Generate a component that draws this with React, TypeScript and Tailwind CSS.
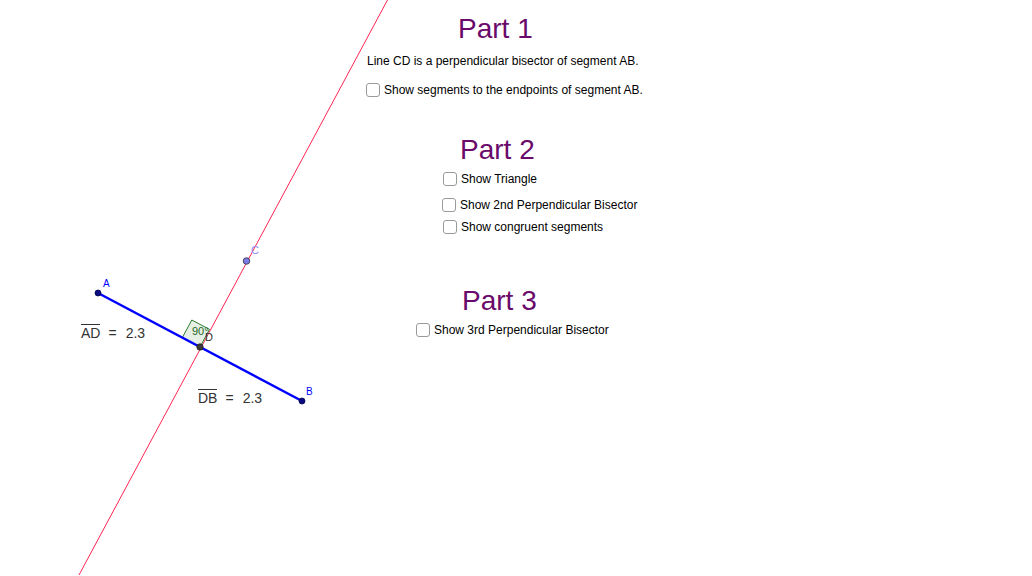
import React from "react";

const font = { fontFamily: '"Liberation Sans", Arial, sans-serif' };

function Check({ label, className }: { label: string; className: string }) {
  return (
    <div className={`flex items-center gap-[4px] ${className}`}>
      <div className="w-[14px] h-[14px] rounded-[3px] border-[1.5px] border-[#9a9a9a] bg-white" />
      <span className="text-[12px] leading-none text-black whitespace-nowrap">{label}</span>
    </div>
  );
}

function Title({ text, className }: { text: string; className: string }) {
  return (
    <div className={`text-[28px] leading-none text-[#6a0a6a] whitespace-nowrap ${className}`}>{text}</div>
  );
}

function Measure({ a, className }: { a: string; className: string }) {
  return (
    <div
      className={`absolute flex items-baseline text-[14px] leading-none text-[#333] whitespace-nowrap ${className}`}
    >
      <span className="border-t border-[#333] pt-[1px]">{a}</span>
      <span className="ml-[8px] mr-[9px]">=</span>
      <span>2.3</span>
    </div>
  );
}

export default function App() {
  return (
    <div className="relative w-[1032px] h-[576px] bg-white overflow-hidden" style={font}>
      {/* geometry canvas */}
      <svg className="absolute inset-0" width="1032" height="576" viewBox="0 0 1032 576">
        <line x1="387.5" y1="0" x2="79" y2="575" stroke="#ff2452" strokeWidth="1" />
        <polygon
          points="200,347 182.3,337.6 191.8,320 209.5,329.4"
          fill="#e6efe6"
          stroke="#2e7d2e"
          strokeWidth="1"
        />
        <line x1="98" y1="293" x2="302" y2="401" stroke="#0000ff" strokeWidth="2.5" />
        <circle cx="98" cy="293" r="3" fill="#0a0a80" stroke="#000050" strokeWidth="0.8" />
        <circle cx="302" cy="401" r="3" fill="#0a0a80" stroke="#000050" strokeWidth="0.8" />
        <circle cx="200" cy="347" r="3.2" fill="#3a3a3a" stroke="#222" strokeWidth="0.8" />
        <circle cx="246.5" cy="261" r="3.3" fill="#7a7ae8" stroke="#333" strokeWidth="0.8" />
      </svg>

      {/* labels placed on the canvas */}
      <div className="absolute left-[103px] top-[278.5px] text-[10px] leading-none text-[#0000ff]">A</div>
      <div className="absolute left-[306px] top-[387px] text-[10px] leading-none text-[#0000ff]">B</div>
      <div className="absolute left-[251px] top-[245.3px] text-[11px] leading-none text-[#8c8cff]">C</div>
      <div className="absolute left-[205px] top-[332px] text-[11px] leading-none text-[#333]">D</div>
      <div className="absolute left-[192px] top-[325.5px] text-[11px] leading-none text-[#1f6a1f]">90°</div>

      <Measure a="AD" className="left-[81px] top-[323.5px]" />
      <Measure a="DB" className="left-[198px] top-[388.5px]" />

      {/* text panel */}
      <div className="absolute left-[366px] top-0 flex flex-col items-start">
        <Title text="Part 1" className="ml-[92px] mt-[14.5px]" />
        <div className="ml-px mt-[12.7px] text-[12px] leading-none text-black whitespace-nowrap">
          Line CD is a perpendicular bisector of segment AB.
        </div>
        <Check label="Show segments to the endpoints of segment AB." className="mt-[15.5px]" />

        <Title text="Part 2" className="ml-[94px] mt-[39px]" />
        <Check label="Show Triangle" className="ml-[77px] mt-[8px]" />
        <Check label="Show 2nd Perpendicular Bisector" className="ml-[76px] mt-[12px]" />
        <Check label="Show congruent segments" className="ml-[77px] mt-[8px]" />

        <Title text="Part 3" className="ml-[96px] mt-[53px]" />
        <Check label="Show 3rd Perpendicular Bisector" className="ml-[50px] mt-[8.5px]" />
      </div>
    </div>
  );
}
